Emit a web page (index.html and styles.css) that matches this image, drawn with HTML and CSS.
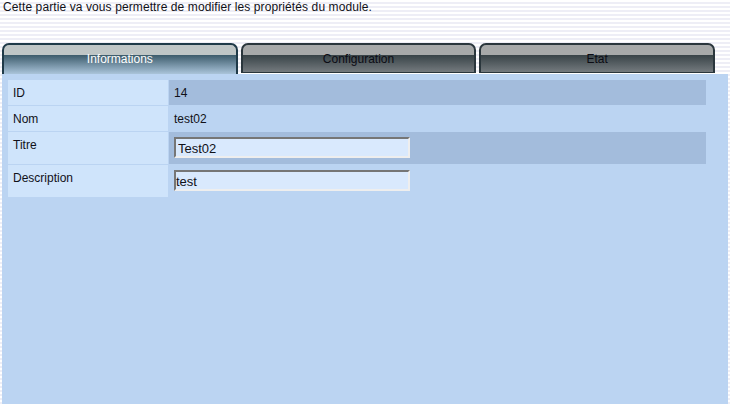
FILE: index.html
```html
<!DOCTYPE html>
<html lang="fr">
<head>
<meta charset="utf-8">
<title>Module</title>
<link rel="stylesheet" href="styles.css">
</head>
<body>
<p class="intro">Cette partie va vous permettre de modifier les propriétés du module.</p>
<div class="tabs">
  <div class="tab tab-active">Informations</div>
  <div class="tab">Configuration</div>
  <div class="tab">Etat</div>
</div>
<div class="panel">
  <div class="grid">
    <div class="label">ID</div>
    <div class="value value-dark">14</div>
    <div class="label">Nom</div>
    <div class="value">test02</div>
    <div class="label">Titre</div>
    <div class="value value-dark value-field"><input class="field field-title" type="text" value="Test02"></div>
    <div class="label">Description</div>
    <div class="value value-field"><input class="field field-desc" type="text" value="test"></div>
  </div>
</div>
</body>
</html>
```
FILE: styles.css
```css
html, body {
  margin: 0;
  padding: 0;
}
body {
  font-family: "Liberation Sans", Arial, sans-serif;
  font-size: 12px;
  color: #111118;
  background: repeating-linear-gradient(to bottom, #ffffff 0, #ffffff 2px, #eeeef6 2px, #eeeef6 4px);
  height: 406px;
  overflow: hidden;
}
.intro {
  margin: 0;
  padding: 0 0 0 3px;
  line-height: 14px;
  height: 14px;
  letter-spacing: 0.1px;
}
.tabs {
  display: flex;
  gap: 3px;
  margin: 29px 15px 0 2px;
  height: 31px;
}
.tab {
  flex: 1;
  box-sizing: border-box;
  height: 30px;
  border: 2px solid #2a363c;
  border-bottom-width: 1px;
  border-radius: 7px 7px 0 0;
  background: linear-gradient(to bottom, #a7a9a9 0, #a7a9a9 10px, #384347 10px, #747a7e 100%);
  text-align: center;
  line-height: 14px;
  padding-top: 7px;
  color: #0c0c14;
}
.tab-active {
  height: 31px;
  border-color: #1f3a48;
  border-bottom: none;
  background: linear-gradient(to bottom, #bfc6c6 0, #bfc6c6 10px, #3c5b6b 10px, #aac4da 100%);
  color: #ffffff;
}
.panel {
  margin: 0 2px;
  height: 330px;
  background: #bbd4f2;
  padding: 6px 0 0 6px;
  box-sizing: border-box;
}
.grid {
  display: grid;
  grid-template-columns: 160px 537px;
  grid-template-rows: 25px 25px 32px 32px;
  gap: 1px;
}
.label {
  background: #cfe4fb;
  padding: 6px 0 0 5px;
  line-height: 14px;
}
.value {
  padding: 6px 0 0 5px;
  line-height: 14px;
}
.value-dark {
  background: #a3bcdc;
}
.value-field {
  padding-top: 5px;
}
.field {
  display: block;
  box-sizing: border-box;
  width: 236px;
  height: 21px;
  margin: 0;
  border-style: solid;
  border-width: 2px;
  border-color: #767676 #eeeeee #eeeeee #767676;
  background: #d9e9fd;
  font-family: "Liberation Sans", Arial, sans-serif;
  font-size: 13px;
  color: #111118;
  outline: none;
}
.field-title {
  padding: 1px 0 0 2px;
}
.field-desc {
  padding: 1px 0 0 0;
}
```
